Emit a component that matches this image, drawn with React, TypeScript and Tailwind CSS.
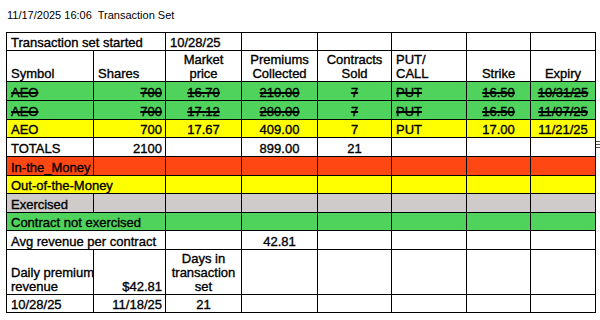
import type { ReactNode } from "react";

const GREEN = "bg-[#4fd35c]";
const YELLOW = "bg-[#ffff00]";
const RED = "bg-[#ff4713]";
const GREY = "bg-[#cfcbcb]";

type CellProps = {
  children?: ReactNode;
  align?: "left" | "center" | "right";
  span?: number;
  className?: string;
};

function Cell({ children, align = "left", span, className = "" }: CellProps) {
  const alignClass =
    align === "center" ? "text-center" : align === "right" ? "text-right pr-[3px]" : "text-left pl-[4px]";
  return (
    <td colSpan={span} className={`border border-black align-bottom p-0 whitespace-nowrap ${alignClass} ${className}`}>
      {children}
    </td>
  );
}

function OldRow({ price, premium, expiry }: { price: string; premium: string; expiry: string }) {
  return (
    <tr className={`h-[19px] ${GREEN} line-through decoration-[1.5px]`}>
      <Cell>AEO</Cell>
      <Cell align="right">700</Cell>
      <Cell align="center">{price}</Cell>
      <Cell align="center">{premium}</Cell>
      <Cell align="center">7</Cell>
      <Cell>PUT</Cell>
      <Cell align="center">16.50</Cell>
      <Cell align="center">{expiry}</Cell>
    </tr>
  );
}

function EmptyCells({ count, className = "" }: { count: number; className?: string }) {
  return (
    <>
      {Array.from({ length: count }).map((_, i) => (
        <Cell key={i} className={className} />
      ))}
    </>
  );
}

export default function App() {
  return (
    <div className="w-[600px] h-[320px] bg-white text-black font-['Liberation_Sans',Arial,sans-serif] relative overflow-hidden">
      <div className="pl-[7px] pt-[9px] h-[32px] text-[11px] leading-[13px] whitespace-pre">
        11/17/2025 16:06  Transaction Set
      </div>
      <div className="pl-[6px] relative">
        <table className="table-fixed border-collapse w-[589px] text-[13px] leading-[15px] [-webkit-text-stroke:0.35px_black]">
          <colgroup>
            <col className="w-[87px]" />
            <col className="w-[72px]" />
            <col className="w-[76px]" />
            <col className="w-[76px]" />
            <col className="w-[74px]" />
            <col className="w-[75px]" />
            <col className="w-[64px]" />
            <col className="w-[65px]" />
          </colgroup>
          <tbody>
            <tr className="h-[18px]">
              <Cell span={2}>Transaction set started</Cell>
              <Cell>10/28/25</Cell>
              <EmptyCells count={5} />
            </tr>
            <tr className="h-[31px] leading-[14px]">
              <Cell>Symbol</Cell>
              <Cell className="pl-[3px]">Shares</Cell>
              <Cell align="center" className="whitespace-normal">
                Market
                <br />
                price
              </Cell>
              <Cell align="center" className="whitespace-normal">
                Premiums
                <br />
                Collected
              </Cell>
              <Cell align="center" className="whitespace-normal">
                Contracts
                <br />
                Sold
              </Cell>
              <Cell className="whitespace-normal">
                PUT/
                <br />
                CALL
              </Cell>
              <Cell align="center">Strike</Cell>
              <Cell align="center">Expiry</Cell>
            </tr>
            <OldRow price="16.70" premium="210.00" expiry="10/31/25" />
            <OldRow price="17.12" premium="280.00" expiry="11/07/25" />
            <tr className={`h-[18px] ${YELLOW}`}>
              <Cell>AEO</Cell>
              <Cell align="right">700</Cell>
              <Cell align="center">17.67</Cell>
              <Cell align="center">409.00</Cell>
              <Cell align="center">7</Cell>
              <Cell>PUT</Cell>
              <Cell align="center">17.00</Cell>
              <Cell align="center">11/21/25</Cell>
            </tr>
            <tr className="h-[19px]">
              <Cell>TOTALS</Cell>
              <Cell align="right">2100</Cell>
              <Cell />
              <Cell align="center">899.00</Cell>
              <Cell align="center">21</Cell>
              <EmptyCells count={3} />
            </tr>
            <tr className={`h-[19px] ${RED}`}>
              <Cell>In-the_Money</Cell>
              <EmptyCells count={7} />
            </tr>
            <tr className={`h-[18px] ${YELLOW}`}>
              <Cell span={2}>Out-of-the-Money</Cell>
              <EmptyCells count={6} />
            </tr>
            <tr className={`h-[19px] ${GREY}`}>
              <Cell>Exercised</Cell>
              <EmptyCells count={7} />
            </tr>
            <tr className={`h-[18px] ${GREEN}`}>
              <Cell span={2}>Contract not exercised</Cell>
              <EmptyCells count={6} />
            </tr>
            <tr className="h-[19px]">
              <Cell span={2}>Avg revenue per contract</Cell>
              <Cell />
              <Cell align="center">42.81</Cell>
              <EmptyCells count={4} />
            </tr>
            <tr className="h-[45px] leading-[14px]">
              <Cell className="overflow-visible">
                Daily premium
                <br />
                revenue
              </Cell>
              <Cell align="right">$42.81</Cell>
              <Cell align="center" className="whitespace-normal">
                Days in
                <br />
                transaction
                <br />
                set
              </Cell>
              <EmptyCells count={5} />
            </tr>
            <tr className="h-[18px]">
              <Cell>10/28/25</Cell>
              <Cell align="right">11/18/25</Cell>
              <Cell align="center">21</Cell>
              <EmptyCells count={5} />
            </tr>
          </tbody>
        </table>
        <svg className="absolute left-[596px] top-[108px]" width="4" height="9" viewBox="0 0 4 9">
          <path d="M0 1.5h4M0 4.5h4M0 7.5h4" stroke="#555" strokeWidth="1" />
        </svg>
      </div>
    </div>
  );
}
